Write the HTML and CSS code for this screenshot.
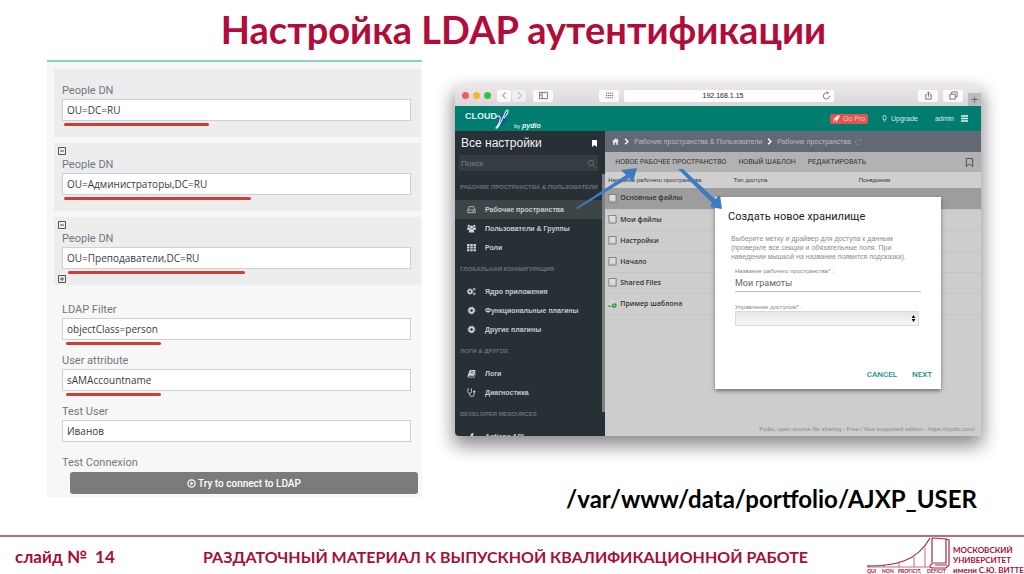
FILE: index.html
```html
<!DOCTYPE html>
<html lang="ru">
<head>
<meta charset="utf-8">
<title>Настройка LDAP аутентификации</title>
<link rel="stylesheet" href="styles.css">
</head>
<body>
<h1 class="title">Настройка LDAP аутентификации</h1>
<main class="content">
  <form class="ldap">
    <section class="group">
      <div class="bar"></div>
      <label class="label" for="dn1">People DN</label>
      <input class="box" id="dn1" value="OU=DC=RU">
      <div class="under"><span class="mark mark-m"></span></div>
    </section>
    <section class="group">
      <div class="bar"><button type="button" class="toggle" aria-label="Свернуть"><svg viewBox="0 0 8 8"><path d="M.5.5h7v7h-7zM2 4h4"/></svg></button></div>
      <label class="label" for="dn2">People DN</label>
      <input class="box" id="dn2" value="OU=Администраторы,DC=RU">
      <div class="under"><span class="mark mark-xl"></span></div>
    </section>
    <section class="group">
      <div class="bar"><button type="button" class="toggle" aria-label="Свернуть"><svg viewBox="0 0 8 8"><path d="M.5.5h7v7h-7zM2 4h4"/></svg></button></div>
      <label class="label" for="dn3">People DN</label>
      <input class="box" id="dn3" value="OU=Преподаватели,DC=RU">
      <div class="under"><button type="button" class="toggle toggle-add" aria-label="Добавить"><svg viewBox="0 0 8 8"><path d="M.5.5h7v7h-7zM2 4h4M4 2v4"/></svg></button><span class="mark mark-l"></span></div>
    </section>
    <section class="fields">
      <label class="label" for="filter">LDAP Filter</label>
      <input class="box" id="filter" value="objectClass=person">
      <div class="under"><span class="mark mark-s"></span></div>
      <label class="label" for="attr">User attribute</label>
      <input class="box" id="attr" value="sAMAccountname">
      <div class="under"><span class="mark mark-s"></span></div>
      <label class="label" for="user">Test User</label>
      <input class="box" id="user" value="Иванов">
      <div class="under"></div>
      <label class="label" for="connect">Test Connexion</label>
      <button type="button" class="connect" id="connect"><svg class="i9" viewBox="0 0 10 10"><circle cx="5" cy="5" r="4" fill="none" stroke="#fff" stroke-width="1.3"/><path d="M3.8 2.8v4.4L7.3 5z" fill="#fff"/></svg>Try to connect to LDAP</button>
    </section>
  </form>

  <div class="right">
    <div class="window">
      <div class="chrome">
        <span class="dots"><i class="dot red"></i><i class="dot yellow"></i><i class="dot green"></i></span>
        <span class="pair"><button class="tool half" aria-label="Назад"><svg class="i9" viewBox="0 0 10 10"><path d="M6.5 1.5 3 5l3.500 3.500"/></svg></button><button class="tool half pale" aria-label="Вперёд"><svg class="i9" viewBox="0 0 10 10"><path d="M3.500 1.500 7 5 3.500 8.500"/></svg></button></span>
        <button class="tool" aria-label="Панель"><svg class="i9" viewBox="0 0 10 10"><path d="M.5 1.500h9v7h-9zM3.500 1.500v7M1.500 3.500h1M1.500 5h1"/></svg></button>
        <button class="tool grid-tool" aria-label="Закладки"><svg class="i9" viewBox="0 0 10 10"><path d="M1 2.500h8M1 5h8M1 7.500h8" stroke-width="1.300" stroke-dasharray="1.400 .8"/></svg></button>
        <div class="address"><span class="url">192.168.1.15</span><svg class="i9" viewBox="0 0 10 10"><path d="M8.500 5.500A3.500 3.500 0 1 1 5 2h2M5.500.5 7 2 5.500 3.500"/></svg></div>
        <button class="tool share" aria-label="Поделиться"><svg class="i9" viewBox="0 0 10 10"><path d="M3.500 4H2v5h6V4H6.500M5 6.500V1M3.500 2.500 5 1l1.500 1.500"/></svg></button>
        <button class="tool" aria-label="Вкладки"><svg class="i9" viewBox="0 0 10 10"><path d="M1 3.500h6V9H1zM3 3.500V1h6v5.500H7"/></svg></button>
        <button class="newtab" aria-label="Новая вкладка">+</button>
      </div>
      <header class="appbar">
        <svg class="brand" viewBox="0 0 84 25"><text x="0" y="13" font-size="9" font-weight="700" fill="#dff2ef">CLOUD</text><path d="M33 21c-2-6 2-13 8-15 2 6-1 14-8 15z" fill="#17539b"/><path d="M31 11c3-2 5-1 4 3s-3 7-4 8c1 1 3-2 5-6l4-9c1-3 3-4 3-2s-2 5-4 7" fill="none" stroke="#e4f2f5" stroke-width="1.100"/><text x="49" y="22" font-size="6" fill="#e7f5f3">by <tspan font-size="7" font-weight="700" font-style="italic">pydio</tspan></text></svg>
        <a class="pro" href="#"><svg class="i7" viewBox="0 0 10 10"><path d="M9.500.5C6 1 4 2.500 3 4.500L1 5l-.5 1.500L3 6.500 4 8v2l1.500-1 .5-2c2-1 3.500-3.500 3.500-6.500zM1 7.500.3 9.700 2.500 9z" fill="#fff"/></svg>Go Pro</a>
        <a class="upgrade" href="#"><svg class="i7" viewBox="0 0 10 10"><path d="M3.800 7C3.800 5.500 2.500 5 2.500 3.300a2.500 2.500 0 0 1 5 0C7.500 5 6.200 5.500 6.200 7zM4 8.500h2" fill="none" stroke="#fff"/></svg>Upgrade</a>
        <a class="admin" href="#">admin<svg class="i7" viewBox="0 0 10 10"><path d="M0 1.500h10M0 5h10M0 8.500h10" stroke="#e6f3f1" stroke-width="2"/></svg></a>
      </header>
      <div class="body">
        <nav class="side">
          <div class="side-head"><span>Все настройки</span><svg class="i7" viewBox="0 0 10 10"><path d="M1.500 0h7v10L5 7l-3.500 3z" fill="#fff"/></svg></div>
          <div class="search"><input class="search-input" aria-label="Поиск" placeholder="Поиск"><svg class="i9" viewBox="0 0 10 10"><circle cx="4.500" cy="4.500" r="3"/><path d="m7 7 2.500 2.500"/></svg></div>
          <h2 class="cat">РАБОЧИЕ ПРОСТРАНСТВА &amp; ПОЛЬЗОВАТЕЛИ</h2>
          <a class="item on" href="#"><svg class="i9" viewBox="0 0 10 10"><path d="M1 5.500 2.500 1.800h5L9 5.500v3H1zM1 5.500h8M6 7h1.500" fill="none" stroke="#b9bcbd"/></svg>Рабочие пространства</a>
          <a class="item" href="#"><svg class="i9" viewBox="0 0 10 10"><circle cx="2" cy="2" r="1.300"/><circle cx="8" cy="2" r="1.300"/><circle cx="5" cy="3.500" r="1.800"/><path d="M0 3.800h3l1 2-1.500 1H.5zM10 3.800H7l-1 2 1.500 1h2zM2 9.500c0-3 1-4 3-4s3 1 3 4z"/></svg>Пользователи &amp; Группы</a>
          <a class="item" href="#"><svg class="i9" viewBox="0 0 10 10"><path d="M0 1h2.800v2.200H0zm3.600 0h2.800v2.200H3.600zm3.600 0H10v2.200H7.200zM0 4h2.800v2.200H0zm3.600 0h2.800v2.200H3.600zM7.200 4H10v2.200H7.200zM0 7h2.800v2.200H0zm3.600 0h2.800v2.200H3.600zM7.200 7H10v2.200H7.200z"/></svg>Роли</a>
          <h2 class="cat">ГЛОБАЛЬНАЯ КОНФИГУРАЦИЯ</h2>
          <a class="item" href="#"><svg class="i9" viewBox="0 0 10 10"><g fill="none" stroke="#cfd1d2"><circle cx="3.300" cy="5" r="2" stroke-width="1.600"/><circle cx="3.300" cy="5" r="3" stroke-dasharray="1.200 1.150"/><circle cx="8" cy="2.500" r="1.100"/><circle cx="8" cy="7.500" r="1.100"/></g></svg>Ядро приложения</a>
          <a class="item" href="#"><svg class="i9" viewBox="0 0 10 10"><g fill="none" stroke="#cfd1d2"><circle cx="5" cy="5" r="2.500" stroke-width="2"/><circle cx="5" cy="5" r="3.800" stroke-dasharray="1.600 1.380"/></g></svg>Функциональные плагины</a>
          <a class="item" href="#"><svg class="i9" viewBox="0 0 10 10"><g fill="none" stroke="#cfd1d2"><circle cx="5" cy="5" r="2.500" stroke-width="2"/><circle cx="5" cy="5" r="3.800" stroke-dasharray="1.600 1.380"/></g></svg>Другие плагины</a>
          <h2 class="cat">ЛОГИ &amp; ДРУГОЕ</h2>
          <a class="item" href="#"><svg class="i9" viewBox="0 0 10 10"><path d="M3 1h6.500L8 7.500H2.300c-.8 0-.8 1 0 1h6L9.500 4l.3.5-1.300 5H2C.8 9.500.3 8.500.7 7.300z"/><path d="M4 3h3.500M3.700 4.500h3.500" stroke="#273034" stroke-width=".6"/></svg>Логи</a>
          <a class="item" href="#"><svg class="i9" viewBox="0 0 10 10"><path d="M2 1H1v3a2 2 0 0 0 4 0V1H4M3 6v1a2.500 2.500 0 0 0 5 0V5" fill="none" stroke="#cfd1d2"/><circle cx="8" cy="4" r="1.300"/></svg>Диагностика</a>
          <h2 class="cat">DEVELOPER RESOURCES</h2>
          <a class="item" href="#"><svg class="i9" viewBox="0 0 10 10"><path d="M7.500 1.500a2.500 2.500 0 0 0-3.500 3V10h2V5.500l2-.5-1.500-1.500z"/></svg>Actions API</a>
        </nav>
        <div class="track"></div>
        <section class="pane">
          <nav class="crumbs"><svg class="i7" viewBox="0 0 10 10"><path d="M5 .5 0 5h1.500v4.500H4V6.500h2v3h2.500V5H10L8.500 3.600V1H7v1.300z" fill="#e2e3e6"/></svg><svg class="i7" viewBox="0 0 10 10"><path d="m3 1 4 4-4 4" fill="none" stroke="#fff" stroke-width="2"/></svg><a href="#">Рабочие пространства &amp; Пользователи</a><svg class="i7" viewBox="0 0 10 10"><path d="m3 1 4 4-4 4" fill="none" stroke="#fff" stroke-width="2"/></svg><a href="#">Рабочие пространства</a><svg class="i7" viewBox="0 0 10 10"><path d="M8 3.500A4 4 0 1 0 8.500 6M8.500 1v3H5.500" fill="none" stroke="#868b96"/></svg></nav>
          <div class="actions"><button>НОВОЕ РАБОЧЕЕ ПРОСТРАНСТВО</button><button>НОВЫЙ ШАБЛОН</button><button>РЕДАКТИРОВАТЬ</button><svg class="i9 save" viewBox="0 0 10 10"><path d="M1.500.5h7v9L5 6.500l-3.500 3z" fill="none" stroke="#444"/></svg></div>
          <table class="list">
            <thead><tr><th>Название рабочего пространства</th><th>Тип доступа</th><th>Псевдоним</th></tr></thead>
            <tbody>
              <tr class="sel"><td><span class="name"><svg class="i9" viewBox="0 0 10 10"><path d="M1 .5h8v8.500H1z" fill="#ddd" stroke="#777"/><path d="M2 8h6" stroke="#aaa"/></svg>Основные файлы</span></td><td></td><td></td></tr>
              <tr><td><span class="name"><svg class="i9" viewBox="0 0 10 10"><path d="M1 .5h8v8.500H1z" fill="#ddd" stroke="#777"/><path d="M2 8h6" stroke="#aaa"/></svg>Мои файлы</span></td><td></td><td></td></tr>
              <tr><td><span class="name"><svg class="i9" viewBox="0 0 10 10"><path d="M1 .5h8v8.500H1z" fill="#ddd" stroke="#777"/><path d="M2 8h6" stroke="#aaa"/></svg>Настройки</span></td><td></td><td></td></tr>
              <tr><td><span class="name"><svg class="i9" viewBox="0 0 10 10"><path d="M1 .5h8v8.500H1z" fill="#ddd" stroke="#777"/><path d="M2 8h6" stroke="#aaa"/></svg>Начало</span></td><td></td><td></td></tr>
              <tr><td><span class="name"><svg class="i9" viewBox="0 0 10 10"><path d="M1 .5h8v8.500H1z" fill="#ddd" stroke="#777"/><path d="M2 8h6" stroke="#aaa"/></svg>Shared Files</span></td><td></td><td></td></tr>
              <tr><td><span class="name"><svg class="i9" viewBox="0 0 10 10"><path d="M1 .5h7v8H1z" fill="#d6d6d6" stroke="#c2c2c2" stroke-width=".5"/><path d="M0 8h4" stroke="#2b8a35"/><circle cx="7" cy="7.300" r="2.700" fill="#2f9e3c"/><circle cx="7" cy="7.300" r=".8" fill="#dff0df"/></svg>Пример шаблона</span></td><td></td><td></td></tr>
            </tbody>
          </table>
          <p class="credit">Pydio, open source file sharing - Free / Non supported edition - https://pydio.com/</p>
        </section>
      </div>
      <div class="dialog" role="dialog" aria-labelledby="dt">
        <h2 class="dialog-title" id="dt">Создать новое хранилище</h2>
        <p class="hint">Выберите метку и драйвер для доступа к данным<br>(проверьте все секции и обязательные поля. При<br>наведении мышкой на название появится подсказка).</p>
        <label class="mini" for="ws">Название рабочего пространства* :</label>
        <input class="line" id="ws" value="Мои грамоты">
        <label class="mini" for="drv">Управление доступом* :</label>
        <div class="pick"><select class="select" id="drv"><option></option></select><svg class="i9" viewBox="0 0 10 10"><path d="M5 1 3 4.500h4zM3 5.500h4L5 9z"/></svg></div>
        <div class="buttons"><button>CANCEL</button><button>NEXT</button></div>
      </div>
      <svg class="arrows" viewBox="0 0 526 351" preserveAspectRatio="none" fill="#3d7cc3"><path d="M121 123 171 90l-5-5 16-2-4 14-4-4-52 31z"/><path d="M223 84h5l32 30 5-4 2 14-12-2 2-4z"/></svg>
    </div>
    <p class="path">/var/www/data/portfolio/AJXP_USER</p>
  </div>
</main>
<footer class="footer">
  <span class="slide">слайд №&nbsp; 14</span>
  <span class="caption">РАЗДАТОЧНЫЙ МАТЕРИАЛ К ВЫПУСКНОЙ КВАЛИФИКАЦИОННОЙ РАБОТЕ</span>
  <svg class="logo" viewBox="0 0 158 38"><g fill="none" stroke="#a92a4b"><path d="M1 29c27 0 50-4 63-28" stroke-width="1.200"/><path d="M3 28v2M18 28v2M33 26v4M48 20v10M59 11v19M1 30h62" stroke-width=".7"/><path d="M66 1v26c-3 1-3 4 1 4h13l3-3V3L80 2v24H67M66 1l14 1v23M69 28h12" stroke-width="1.200"/></g><g fill="#a50f38" font-weight="700"><text x="1" y="36" font-size="5">QUI</text><text x="16" y="36" font-size="5">NON</text><text x="32" y="36" font-size="5">PROFICIT,</text><text x="61" y="36" font-size="5">DEFICIT</text><g font-size="8"><text x="87" y="16">МОСКОВСКИЙ</text><text x="87" y="26">УНИВЕРСИТЕТ</text><text x="87" y="36">имени С.Ю. ВИТТЕ</text></g></g></svg>
</footer>
</body>
</html>
```
FILE: styles.css
```css
* { box-sizing: border-box; }
body { margin: 0; min-height: 100vh; display: flex; flex-direction: column; background: #fff; font-family: "Liberation Sans", Arial, sans-serif; }
h1, h2, p { margin: 0; }
button, input, select { font: inherit; color: inherit; margin: 0; padding: 0; border: 0; background: none; border-radius: 0; min-width: 0; }
a { color: inherit; text-decoration: none; }
svg { flex: none; }
.i9 { width: 9px; height: 9px; }
.i7 { width: 7px; height: 7px; }

.title { height: 60px; padding-left: 23px; text-align: center; color: #b00d3a; font: 700 38px/58px Lato, "Open Sans", sans-serif; }
.content { flex: 1; display: grid; grid-template-columns: 375fr 526fr; gap: 33px; align-items: start; padding: 0 43px 0 47px; }

.ldap { background: #f7f7f7; border-top: 2px solid #8dd0c9; padding: 7px 1px 3px 7px; font-family: Roboto, sans-serif; }
.group { background: #ededed; margin-bottom: 6px; padding: 0 10px 0 4px; }
.bar { height: 12px; display: flex; align-items: flex-end; }
.toggle { width: 8px; height: 8px; display: block; }
.toggle svg { display: block; width: 8px; height: 8px; fill: none; stroke: #555; }
.toggle-add { margin-top: 6px; }
.label { display: block; height: 18px; line-height: 20px; padding-left: 4px; font-size: 11px; color: #6f7885; }
.box { display: block; width: calc(100% - 4px); height: 22px; margin-left: 4px; padding: 0 4px; border: 1px solid #ccd0d2; background: #fff; color: #3b3b3b; font: 10px "Open Sans", sans-serif; }
.under { height: 16px; display: flex; }
.mark { height: 3px; margin: 2px 0 0 6px; border-radius: 2px; background: #cf3d38; }
.toggle + .mark { margin-left: 2px; }
.mark-s { width: 27%; margin-left: 8px; }
.mark-m { width: 41%; }
.mark-l { width: 50%; }
.mark-xl { width: 53%; }
.fields { padding: 9px 10px 0 4px; }
.fields .under { height: 11px; }
.connect { width: calc(100% - 5px); height: 22px; margin: 1px 0 0 12px; border-radius: 3px; background: #7b7b7b; color: #fff; font: 500 10px Roboto, sans-serif; display: flex; align-items: center; justify-content: center; gap: 2px; }

.right { padding-top: 25px; }
.window { position: relative; border-radius: 4px; box-shadow: 0 8px 18px 2px rgba(0,0,0,.45); }
.chrome { height: 21px; display: flex; align-items: center; padding-left: 7px; background: linear-gradient(#ebe7eb, #d9d5d9); border-radius: 4px 4px 0 0; }
.chrome svg { fill: none; stroke: #6d6d6d; }
.dots { display: flex; gap: 4px; }
.dot { width: 7px; height: 7px; border-radius: 50%; }
.red { background: #f45d57; }
.yellow { background: #f8b42f; }
.green { background: #35c243; }
.pair { display: flex; gap: 1px; margin: 0 7px 0 6px; }
.tool { width: 20px; height: 12px; border-radius: 2px; background: #fafafa; display: flex; align-items: center; justify-content: center; margin-right: 5px; }
.half { width: 14px; margin: 0; }
.pale { opacity: .6; }
.grid-tool { margin-left: 41px; }
.address { flex: 1; height: 12px; display: flex; align-items: center; padding-right: 3px; background: #fff; border-radius: 2px; font-size: 7px; color: #222; }
.url { flex: 1; text-align: center; }
.share { margin-left: 84px; }
.newtab { align-self: flex-end; width: 13px; height: 13px; background: #bdb9bd; color: #666; font-size: 12px; line-height: 12px; }
.appbar { height: 25px; display: flex; align-items: center; padding: 0 13px 0 10px; background: #007d6f; color: #d7eeea; font-size: 7px; }
.appbar a { display: flex; align-items: center; gap: 3px; }
.brand { width: 84px; height: 25px; margin-right: auto; }
.pro { height: 10px; padding: 0 3px; border-radius: 2px; background: #e0564f; color: #f9c9c3; }
.upgrade { margin: 0 17px 0 13px; }
.appbar .admin { gap: 7px; }
.body { display: flex; height: 305px; border-radius: 0 0 4px 4px; overflow: hidden; }
.side { width: 28%; height: 100%; overflow: hidden; background: #273034; color: #c6c9ca; }
.side-head { height: 24px; display: flex; align-items: center; justify-content: space-between; padding: 0 4px 0 6px; font-size: 12px; color: #f1f1f1; }
.search { height: 16px; margin: 0 4px 4px; padding: 0 2px; display: flex; align-items: center; background: #373d40; }
.search-input { flex: 1; font-size: 8px; }
.search-input::placeholder { color: #7d8284; }
.search svg { fill: none; stroke: #6c7173; }
.cat { height: 25px; padding-left: 5px; line-height: 25px; font-size: 6px; font-weight: 700; color: #6c7375; white-space: nowrap; }
.item { height: 19px; display: flex; align-items: center; gap: 9px; padding-left: 12px; font-size: 7px; font-weight: 700; white-space: nowrap; }
.item svg { fill: #cfd1d2; }
.on { background: #3e4547; }
.track { width: 3px; background: linear-gradient(#273034 0 14%, #7d8183 14% 92%, #273034 92%); }
.pane { flex: 1; min-width: 0; display: flex; flex-direction: column; background: #cdcdcd; }
.crumbs { height: 21px; display: flex; align-items: center; gap: 4px; padding-left: 7px; background: #636875; color: #b9bcc4; font-size: 7px; white-space: nowrap; }
.actions { height: 20px; display: flex; align-items: center; gap: 12px; padding: 0 7px 0 10px; background: #b2b2b2; color: #333; font: 7px Roboto, sans-serif; white-space: nowrap; }
.save { margin-left: auto; }
.list { width: 100%; table-layout: fixed; border-collapse: collapse; color: #333; }
.list th { height: 16px; padding: 0 3px; background: #cfcfcf; font-size: 6px; font-weight: 400; text-align: left; white-space: nowrap; line-height: 8px; }
.list td { height: 21px; padding: 0 3px; border-bottom: 1px solid #c4c4c4; font: 7px/10px "Open Sans", sans-serif; }
.name { display: flex; align-items: center; gap: 3px; font-weight: 600; }
.sel { background: #9d9d9d; }
.credit { margin-top: auto; padding: 0 6px 3px; text-align: right; font-size: 6px; line-height: 8px; color: #878787; }

.dialog { position: absolute; left: 260px; top: 112px; width: 43%; background: #fff; padding: 11px 9px 6px 13px; box-shadow: 0 2px 4px rgba(0,0,0,.45); }
.dialog-title { font: 400 11px/18px Roboto, sans-serif; color: #222; }
.hint { margin: 8px 0 6px 3px; font-size: 7px; line-height: 9px; color: #8c8c8c; white-space: nowrap; }
.mini { display: block; margin-left: 7px; font-size: 6px; line-height: 8px; color: #848484; }
.line { display: block; width: calc(100% - 18px); height: 17px; margin: 0 0 11px 7px; border-bottom: 1px solid #bbb; font: 9px Roboto, sans-serif; color: #666; }
.pick { display: flex; align-items: center; width: calc(100% - 20px); height: 15px; margin: 0 0 0 7px; border: 1px solid #d9d9d9; background: linear-gradient(#e6e6e6, #f7f7f7); }
.select { flex: 1; appearance: none; height: 13px; }
.buttons { display: flex; justify-content: flex-end; gap: 15px; margin-top: 39px; }
.buttons button { height: 18px; font: 500 8px Roboto, sans-serif; color: #159588; }
.arrows { position: absolute; inset: 0; width: 100%; height: 100%; pointer-events: none; }
.path { margin-top: 44px; padding-right: 4px; text-align: right; color: #000; font: 700 24px/38px Lato, "Open Sans", sans-serif; white-space: nowrap; }

.footer { height: 39px; display: flex; align-items: center; border-top: 2px solid #bb6c80; padding-left: 15px; color: #a50f38; font: 700 17px/20px Lato, "Open Sans", sans-serif; white-space: nowrap; }
.slide { width: 188px; padding-top: 2px; }
.caption { flex: 1; padding-top: 2px; font-size: 16px; }
.logo { width: 158px; height: 38px; font-family: Lato, "Open Sans", sans-serif; }
```
